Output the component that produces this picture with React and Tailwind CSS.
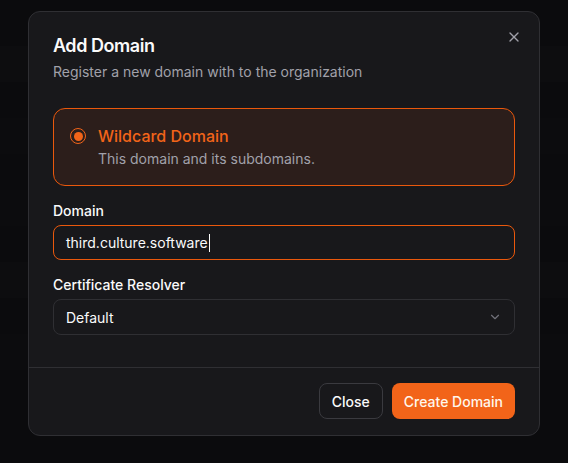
import { X, ChevronDown } from "lucide-react";

export default function App() {
  return (
    <div
      className="relative h-[463px] w-[568px] overflow-hidden bg-[#0b0b0d]"
      style={{ fontFamily: "Inter, 'Noto Sans', sans-serif" }}
    >
      <div className="flex flex-col pt-[46px] opacity-60">
        <div className="h-[36px] bg-[#0f0f11]" />
        <div className="h-[36px]" />
        <div className="h-[36px] bg-[#0e0e10]" />
        <div className="h-[36px]" />
        <div className="h-[36px] bg-[#0e0e10]" />
        <div className="h-[36px]" />
        <div className="h-[36px] bg-[#0f0f11]" />
        <div className="h-[36px]" />
        <div className="h-[36px] bg-[#0e0e10]" />
      </div>

      <div className="absolute left-[28px] top-[11px] w-[512px] rounded-xl border border-[#2f2f33] bg-[#18181b]">
        <button className="absolute right-[17px] top-[17px] text-[#a1a1aa]">
          <X size={16} strokeWidth={2} />
        </button>
        <div className="px-[24px] pt-[20px]">
          <h2 className="text-[18px] font-semibold leading-[28px] tracking-tight text-[#fafafa]">Add Domain</h2>
          <p className="mt-[2px] text-[14px] leading-[20px] text-[#a1a1aa]">
            Register a new domain with to the organization
          </p>

          <div className="mt-[26px] flex gap-[12px] rounded-xl border border-[#ea580c] bg-[#2c1e1b] px-[16px] pb-[16px] pt-[17px]">
            <div className="mt-[2px] flex h-[16px] w-[16px] items-center justify-center rounded-full border-[1.5px] border-[#f26419]">
              <div className="h-[9px] w-[9px] rounded-full bg-[#f26419]" />
            </div>
            <div className="flex flex-col">
              <span className="text-[16px] font-medium leading-[20px] text-[#f26419]">Wildcard Domain</span>
              <span className="mt-[3px] text-[14px] leading-[20px] text-[#a1a1aa]">
                This domain and its subdomains.
              </span>
            </div>
          </div>

          <label className="mt-[15px] block text-[14px] font-medium leading-[20px] text-[#fafafa]">Domain</label>
          <div className="mt-[4px] flex h-[35px] items-center rounded-lg border border-[#ea580c] px-[12px] text-[14px] text-[#fafafa]">
            third.culture.software
            <span className="ml-[1px] inline-block h-[18px] w-[1px] bg-[#fafafa]" />
          </div>

          <label className="mt-[15px] block text-[14px] font-medium leading-[20px] text-[#fafafa]">
            Certificate Resolver
          </label>
          <div className="mt-[4px] flex h-[36px] items-center justify-between rounded-lg border border-[#2f2f33] px-[12px] text-[14px] text-[#fafafa]">
            <span>Default</span>
            <ChevronDown size={14} className="text-[#71717a]" />
          </div>
        </div>

        <div className="mt-[32px] border-t border-[#2f2f33]" />
        <div className="flex justify-end gap-[9px] px-[24px] pb-[16px] pt-[15px]">
          <button className="h-[36px] rounded-lg border border-[#3a3a3f] bg-[#18181b] px-[12px] text-[14px] font-medium text-[#fafafa]">
            Close
          </button>
          <button className="h-[36px] rounded-lg bg-[#f26419] px-[12px] text-[14px] font-medium text-[#fff7ed]">
            Create Domain
          </button>
        </div>
      </div>
    </div>
  );
}
